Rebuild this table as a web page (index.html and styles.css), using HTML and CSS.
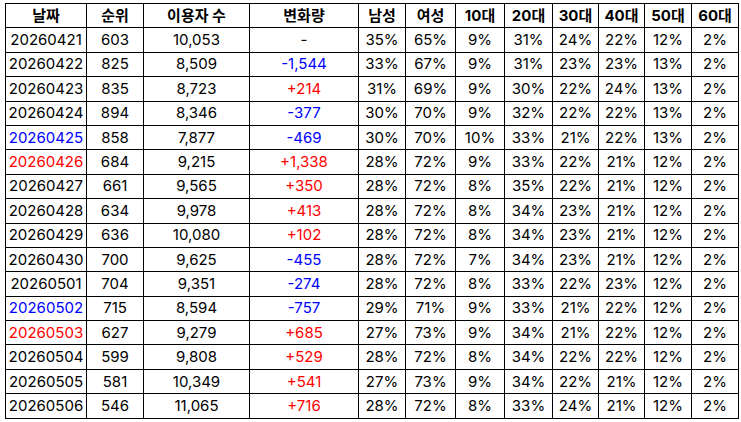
FILE: index.html
```html
<!DOCTYPE html>
<html lang="ko">
<head>
<meta charset="utf-8">
<link rel="stylesheet" href="styles.css">
</head>
<body>
<table class="stats">
<colgroup>
<col class="c-date"><col class="c-rank"><col class="c-users"><col class="c-diff"><col class="c-m"><col class="c-f"><col class="c-a10"><col class="c-a20"><col class="c-a30"><col class="c-a40"><col class="c-a50"><col class="c-a60">
</colgroup>
<thead>
<tr><th>날짜</th><th>순위</th><th>이용자 수</th><th>변화량</th><th>남성</th><th>여성</th><th>10대</th><th>20대</th><th>30대</th><th>40대</th><th>50대</th><th>60대</th></tr>
</thead>
<tbody>
<tr><td>20260421</td><td>603</td><td>10,053</td><td>-</td><td>35%</td><td>65%</td><td>9%</td><td>31%</td><td>24%</td><td>22%</td><td>12%</td><td>2%</td></tr>
<tr><td>20260422</td><td>825</td><td>8,509</td><td class="neg">-1,544</td><td>33%</td><td>67%</td><td>9%</td><td>31%</td><td>23%</td><td>23%</td><td>13%</td><td>2%</td></tr>
<tr><td>20260423</td><td>835</td><td>8,723</td><td class="pos">+214</td><td>31%</td><td>69%</td><td>9%</td><td>30%</td><td>22%</td><td>24%</td><td>13%</td><td>2%</td></tr>
<tr><td>20260424</td><td>894</td><td>8,346</td><td class="neg">-377</td><td>30%</td><td>70%</td><td>9%</td><td>32%</td><td>22%</td><td>22%</td><td>13%</td><td>2%</td></tr>
<tr><td class="sat">20260425</td><td>858</td><td>7,877</td><td class="neg">-469</td><td>30%</td><td>70%</td><td>10%</td><td>33%</td><td>21%</td><td>22%</td><td>13%</td><td>2%</td></tr>
<tr><td class="sun">20260426</td><td>684</td><td>9,215</td><td class="pos">+1,338</td><td>28%</td><td>72%</td><td>9%</td><td>33%</td><td>22%</td><td>21%</td><td>12%</td><td>2%</td></tr>
<tr><td>20260427</td><td>661</td><td>9,565</td><td class="pos">+350</td><td>28%</td><td>72%</td><td>8%</td><td>35%</td><td>22%</td><td>21%</td><td>12%</td><td>2%</td></tr>
<tr><td>20260428</td><td>634</td><td>9,978</td><td class="pos">+413</td><td>28%</td><td>72%</td><td>8%</td><td>34%</td><td>23%</td><td>21%</td><td>12%</td><td>2%</td></tr>
<tr><td>20260429</td><td>636</td><td>10,080</td><td class="pos">+102</td><td>28%</td><td>72%</td><td>8%</td><td>34%</td><td>23%</td><td>21%</td><td>12%</td><td>2%</td></tr>
<tr><td>20260430</td><td>700</td><td>9,625</td><td class="neg">-455</td><td>28%</td><td>72%</td><td>7%</td><td>34%</td><td>23%</td><td>21%</td><td>12%</td><td>2%</td></tr>
<tr><td>20260501</td><td>704</td><td>9,351</td><td class="neg">-274</td><td>28%</td><td>72%</td><td>8%</td><td>33%</td><td>22%</td><td>23%</td><td>12%</td><td>2%</td></tr>
<tr><td class="sat">20260502</td><td>715</td><td>8,594</td><td class="neg">-757</td><td>29%</td><td>71%</td><td>9%</td><td>33%</td><td>21%</td><td>22%</td><td>12%</td><td>2%</td></tr>
<tr><td class="sun">20260503</td><td>627</td><td>9,279</td><td class="pos">+685</td><td>27%</td><td>73%</td><td>9%</td><td>34%</td><td>21%</td><td>22%</td><td>12%</td><td>2%</td></tr>
<tr><td>20260504</td><td>599</td><td>9,808</td><td class="pos">+529</td><td>28%</td><td>72%</td><td>8%</td><td>34%</td><td>22%</td><td>22%</td><td>12%</td><td>2%</td></tr>
<tr><td>20260505</td><td>581</td><td>10,349</td><td class="pos">+541</td><td>27%</td><td>73%</td><td>9%</td><td>34%</td><td>22%</td><td>21%</td><td>12%</td><td>2%</td></tr>
<tr><td>20260506</td><td>546</td><td>11,065</td><td class="pos">+716</td><td>28%</td><td>72%</td><td>8%</td><td>33%</td><td>24%</td><td>21%</td><td>12%</td><td>2%</td></tr>
</tbody>
</table>
</body>
</html>
```
FILE: styles.css
```css
html, body {
  margin: 0;
  padding: 0;
  background: #fff;
}
body {
  padding: 3px 0 0 5px;
  font-family: Inter, "Noto Sans CJK KR", sans-serif;
  font-size: 15px;
  color: #000;
}
.stats {
  border-collapse: collapse;
  table-layout: fixed;
  width: 733px;
}
.stats th, .stats td {
  border: 1px solid #000;
  text-align: center;
  padding: 0;
  height: 23.4px;
  line-height: 18px;
  white-space: nowrap;
}
.stats th {
  font-weight: 700;
}
.c-date { width: 81px; }
.c-rank { width: 57px; }
.c-users { width: 106px; }
.c-diff { width: 109px; }
.c-m { width: 47px; }
.c-f { width: 50px; }
.c-a10 { width: 49px; }
.c-a20 { width: 48px; }
.c-a30 { width: 46px; }
.c-a40 { width: 46px; }
.c-a50 { width: 47px; }
.c-a60 { width: 47px; }
.neg { color: #0000ff; }
.pos { color: #ff0000; }
.sat { color: #0000ff; }
.sun { color: #ff0000; }
```
